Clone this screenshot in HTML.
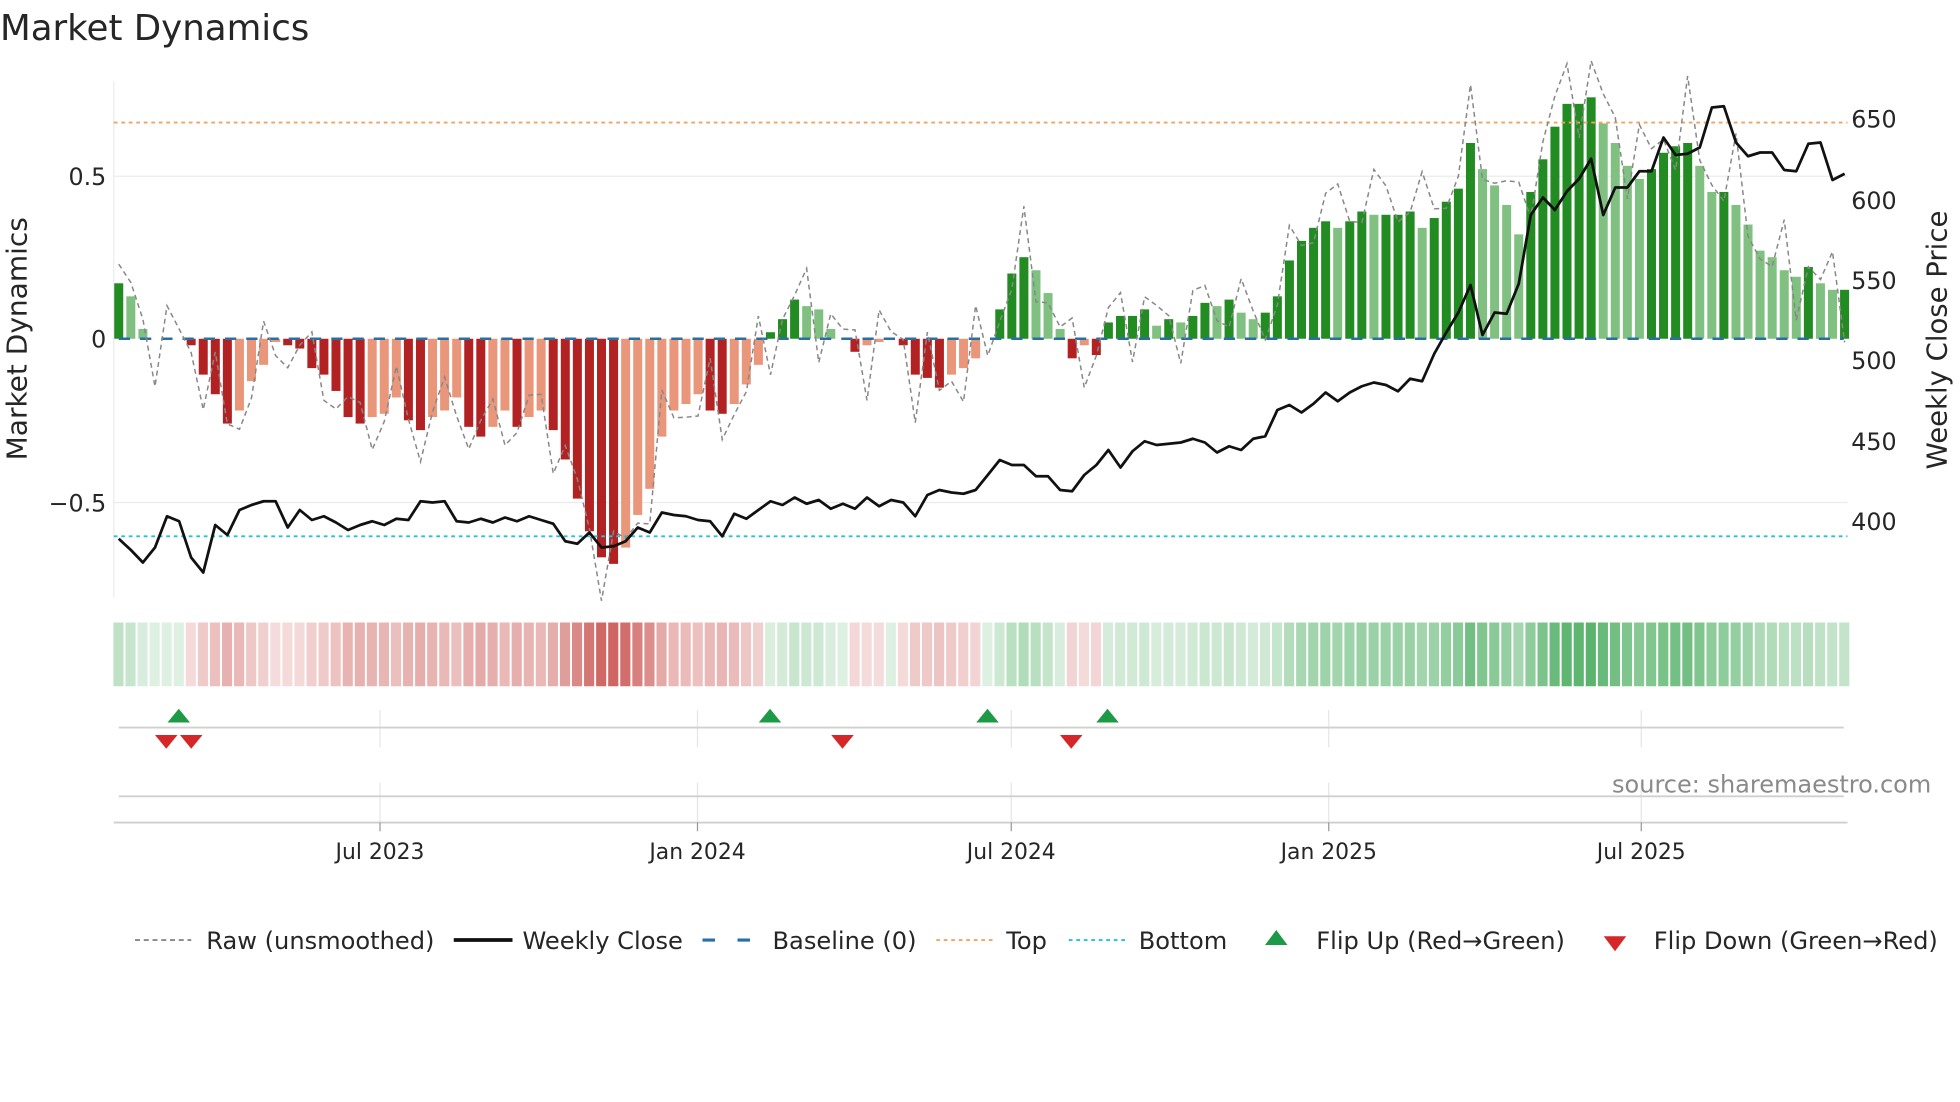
<!DOCTYPE html>
<html><head><meta charset="utf-8"><style>
html,body{margin:0;padding:0;background:#fff;width:1960px;height:1102px;overflow:hidden}
svg{display:block}
text{font-family:"DejaVu Sans","Liberation Sans",sans-serif;fill:#262626}
</style></head><body>
<svg id="s" width="1960" height="1102" viewBox="0 0 1568 881.6" xmlns="http://www.w3.org/2000/svg">
<text x="0" y="32" font-size="28.5">Market Dynamics</text>
<line x1="91" y1="65" x2="91" y2="478" stroke="#ebebeb" stroke-width="1"/>
<line x1="91" y1="141" x2="1478" y2="141" stroke="#ebebeb" stroke-width="1"/>
<line x1="91" y1="402" x2="1478" y2="402" stroke="#ebebeb" stroke-width="1"/>
<text x="85" y="148" font-size="19" text-anchor="end">0.5</text>
<text x="85" y="278" font-size="19" text-anchor="end">0</text>
<text x="85" y="409" font-size="19" text-anchor="end">−0.5</text>
<text transform="translate(21,271) rotate(-90)" font-size="22.4" text-anchor="middle">Market Dynamics</text>
<text x="1481" y="102" font-size="19">650</text>
<text x="1481" y="167" font-size="19">600</text>
<text x="1481" y="231" font-size="19">550</text>
<text x="1481" y="295" font-size="19">500</text>
<text x="1481" y="360" font-size="19">450</text>
<text x="1481" y="424" font-size="19">400</text>
<text transform="translate(1557,272) rotate(-90)" font-size="22" text-anchor="middle">Weekly Close Price</text>
<g id="bars"></g>
<line x1="91" y1="98" x2="1478" y2="98" stroke="#f4a261" stroke-width="1.5" stroke-dasharray="3,3"/>
<line x1="91" y1="429" x2="1478" y2="429" stroke="#22c3de" stroke-width="1.5" stroke-dasharray="3,3"/>
<line x1="95" y1="271" x2="1475" y2="271" stroke="#2a6ea6" stroke-width="2" stroke-dasharray="9,8"/>
<polyline id="raw" fill="none" stroke="#888" stroke-width="1.2" stroke-dasharray="4,3"/>
<polyline id="px" fill="none" stroke="#111" stroke-width="2.2" stroke-linejoin="round"/>
<g id="heat"></g>
<g stroke="#e6e6e6" stroke-width="1">
<line x1="304" y1="568" x2="304" y2="598"/><line x1="558" y1="568" x2="558" y2="598"/><line x1="809" y1="568" x2="809" y2="598"/><line x1="1063" y1="568" x2="1063" y2="598"/><line x1="1313" y1="568" x2="1313" y2="598"/>
<line x1="304" y1="626" x2="304" y2="658"/><line x1="558" y1="626" x2="558" y2="658"/><line x1="809" y1="626" x2="809" y2="658"/><line x1="1063" y1="626" x2="1063" y2="658"/><line x1="1313" y1="626" x2="1313" y2="658"/>
</g>
<line x1="95" y1="582" x2="1475" y2="582" stroke="#d0d0d0" stroke-width="1.5"/>
<line x1="95" y1="637" x2="1475" y2="637" stroke="#d0d0d0" stroke-width="1.5"/>
<line x1="91" y1="658" x2="1478" y2="658" stroke="#cfcfcf" stroke-width="1.5"/>
<g stroke="#999" stroke-width="1"><line x1="304" y1="658" x2="304" y2="665"/><line x1="558" y1="658" x2="558" y2="665"/><line x1="809" y1="658" x2="809" y2="665"/><line x1="1063" y1="658" x2="1063" y2="665"/><line x1="1313" y1="658" x2="1313" y2="665"/></g>
<g font-size="17.5" text-anchor="middle"><text x="304" y="687">Jul 2023</text><text x="558" y="687">Jan 2024</text><text x="809" y="687">Jul 2024</text><text x="1063" y="687">Jan 2025</text><text x="1313" y="687">Jul 2025</text></g>
<g fill="#1e9a46"><path d="M143,567 l-9,11 h18z"/><path d="M616,567 l-9,11 h18z"/><path d="M790,567 l-9,11 h18z"/><path d="M886,567 l-9,11 h18z"/></g>
<g fill="#d62728"><path d="M133,599 l-9,-11 h18z"/><path d="M153,599 l-9,-11 h18z"/><path d="M674,599 l-9,-11 h18z"/><path d="M857,599 l-9,-11 h18z"/></g>
<text x="1545" y="634" font-size="19.2" text-anchor="end" style="fill:#8a8a8a">source: sharemaestro.com</text>
<g font-size="19.3">
<line x1="108" y1="752" x2="153" y2="752" stroke="#888" stroke-width="1.5" stroke-dasharray="4,3"/><text x="165" y="759">Raw (unsmoothed)</text>
<line x1="363" y1="752" x2="410" y2="752" stroke="#111" stroke-width="3"/><text x="418" y="759">Weekly Close</text>
<line x1="562" y1="752" x2="607" y2="752" stroke="#2a6ea6" stroke-width="2.5" stroke-dasharray="10,18"/><text x="618" y="759">Baseline (0)</text>
<line x1="749" y1="752" x2="794" y2="752" stroke="#f4a261" stroke-width="1.5" stroke-dasharray="3,3"/><text x="805" y="759">Top</text>
<line x1="855" y1="752" x2="900" y2="752" stroke="#22c3de" stroke-width="1.5" stroke-dasharray="3,3"/><text x="911" y="759">Bottom</text>
<path d="M1021,744 l-9,12 h18z" fill="#1e9a46"/><text x="1053" y="759">Flip Up (Red→Green)</text>
<path d="M1292,761 l-9,-12 h18z" fill="#d62728"/><text x="1323" y="759">Flip Down (Green→Red)</text>
</g>
</svg>
<script>
var V=[.17,.13,.03,0,0,0,-.02,-.11,-.17,-.26,-.22,-.13,-.08,-.01,-.02,-.03,-.09,-.11,-.16,-.24,-.26,-.24,-.23,-.18,-.25,-.28,-.24,-.22,-.18,-.27,-.3,-.27,-.22,-.27,-.24,-.22,-.28,-.37,-.49,-.59,-.67,-.69,-.64,-.54,-.46,-.3,-.22,-.2,-.17,-.22,-.23,-.2,-.14,-.08,.02,.06,.12,.1,.09,.03,0,-.04,-.02,-.01,0,-.02,-.11,-.12,-.15,-.11,-.09,-.06,0,.09,.2,.25,.21,.14,.03,-.06,-.02,-.05,.05,.07,.07,.09,.04,.06,.05,.07,.11,.1,.12,.08,.06,.08,.13,.24,.3,.34,.36,.34,.36,.39,.38,.38,.38,.39,.34,.37,.42,.46,.6,.52,.47,.41,.32,.45,.55,.65,.72,.72,.74,.66,.6,.53,.49,.52,.57,.59,.6,.53,.45,.45,.41,.35,.27,.25,.21,.19,.22,.17,.15,.15];
var P=[431,440,450,438,413,417,446,458,420,428,408,404,401,401,422,408,416,413,418,424,420,417,420,415,416,401,402,401,417,418,415,418,414,417,413,416,419,433,435,426,438,437,433,422,426,410,412,413,416,417,429,411,415,408,401,404,398,403,400,407,403,407,398,405,400,402,413,396,392,394,395,392,380,368,372,372,381,381,392,393,380,372,360,374,361,353,356,355,354,351,354,362,357,360,351,349,328,324,330,323,314,321,314,309,306,308,313,303,305,283,266,250,228,268,250,251,227,172,158,168,153,143,127,172,150,150,137,137,110,124,123,118,86,85,114,125,122,122,136,137,115,114,144,139];
var ns="http://www.w3.org/2000/svg",b=document.getElementById('bars'),h=document.getElementById('heat');
function el(t,a,p){var e=document.createElementNS(ns,t);for(var k in a)e.setAttribute(k,a[k]);p.appendChild(e);}
var raw=[],px=[];
for(var i=0;i<V.length;i++){
 var x=95+i*9.655,v=V[i],dk=(v>0)?(V[i]>=(V[i-1]||0)):(V[i]<=(V[i-1]||0));
 var c=v>=0?(dk?'#228b22':'#80c080'):(dk?'#b22222':'#e9967a');
 var y=271-v*261;
 if(Math.abs(v)>0.004) el('rect',{x:x-3.6,y:Math.min(y,271),width:7.2,height:Math.abs(y-271),fill:c},b);
 var a=Math.min(0.8,0.16+Math.abs(v)*0.85);
 el('rect',{x:x-4.3,y:498,width:8.1,height:51,fill:v>=0?'rgba(46,160,70,'+a+')':'rgba(190,50,45,'+a+')'},h);
 var r=v+0.1*Math.sin(i*1.7)+0.07*Math.sin(i*3.1+1)+(v>0.3?0.05:0);
 raw.push(x.toFixed(1)+','+(271-r*261).toFixed(1));
 px.push(x.toFixed(1)+','+P[i]);
}
document.getElementById('raw').setAttribute('points',raw.join(' '));
document.getElementById('px').setAttribute('points',px.join(' '));
</script>
</body></html>
